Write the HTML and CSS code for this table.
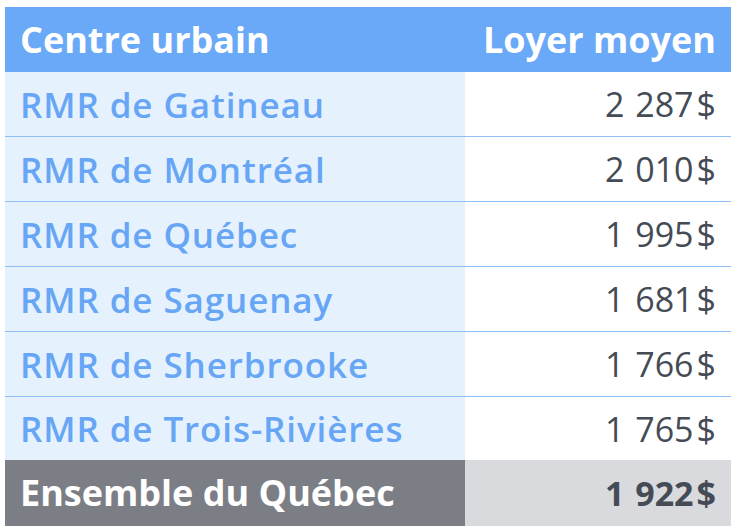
FILE: index.html
```html
<!DOCTYPE html>
<html lang="fr">
<head>
<meta charset="utf-8">
<link rel="stylesheet" href="styles.css">
</head>
<body>
<table class="rent">
  <thead>
    <tr><th class="c-name">Centre urbain</th><th class="c-val">Loyer moyen</th></tr>
  </thead>
  <tbody>
    <tr><td class="c-name">RMR de Gatineau</td><td class="c-val">2 287<span class="cur">$</span></td></tr>
    <tr><td class="c-name">RMR de Montréal</td><td class="c-val">2 010<span class="cur">$</span></td></tr>
    <tr><td class="c-name">RMR de Québec</td><td class="c-val">1 995<span class="cur">$</span></td></tr>
    <tr><td class="c-name">RMR de Saguenay</td><td class="c-val">1 681<span class="cur">$</span></td></tr>
    <tr><td class="c-name">RMR de Sherbrooke</td><td class="c-val">1 766<span class="cur">$</span></td></tr>
    <tr><td class="c-name">RMR de Trois-Rivières</td><td class="c-val">1 765<span class="cur">$</span></td></tr>
  </tbody>
  <tfoot>
    <tr><td class="c-name">Ensemble du Québec</td><td class="c-val">1 922<span class="cur">$</span></td></tr>
  </tfoot>
</table>
</body>
</html>
```
FILE: styles.css
```css
html, body { margin: 0; padding: 0; background: #fff; }
body { padding: 7px 5px; }
.rent {
  width: 726px;
  border-collapse: collapse;
  font-family: "Open Sans", Lato, sans-serif;
  font-size: 33px;
  line-height: 1;
}
.rent th, .rent td { padding: 0 15px; white-space: nowrap; }
.rent .c-name { width: 430px; text-align: left; }
.rent .c-val { text-align: right; }
.rent .cur { margin-left: 3px; }
.rent thead th {
  height: 65px;
  background: #6aa9f7;
  color: #fff;
  font-weight: 700;
  font-size: 36px;
}
.rent tbody td {
  height: 64px;
  border-bottom: 1px solid #8fbff6;
}
.rent tbody tr:last-child td { border-bottom: 0; height: 63px; }
.rent tbody .c-name {
  background: #e6f1fe;
  color: #66a6f5;
  font-weight: 600;
  font-size: 35px;
  letter-spacing: 0.9px;
}
.rent tbody .c-val { background: #fff; color: #444b55; font-weight: 400; font-size: 34px; word-spacing: 2px; }
.rent tfoot td { height: 66px; font-weight: 700; }
.rent tfoot .c-name { background: #7b7e85; color: #fff; font-size: 36px; }
.rent tfoot .c-val { background: #d9dadd; color: #444b55; font-size: 34px; word-spacing: 2px; }
```
